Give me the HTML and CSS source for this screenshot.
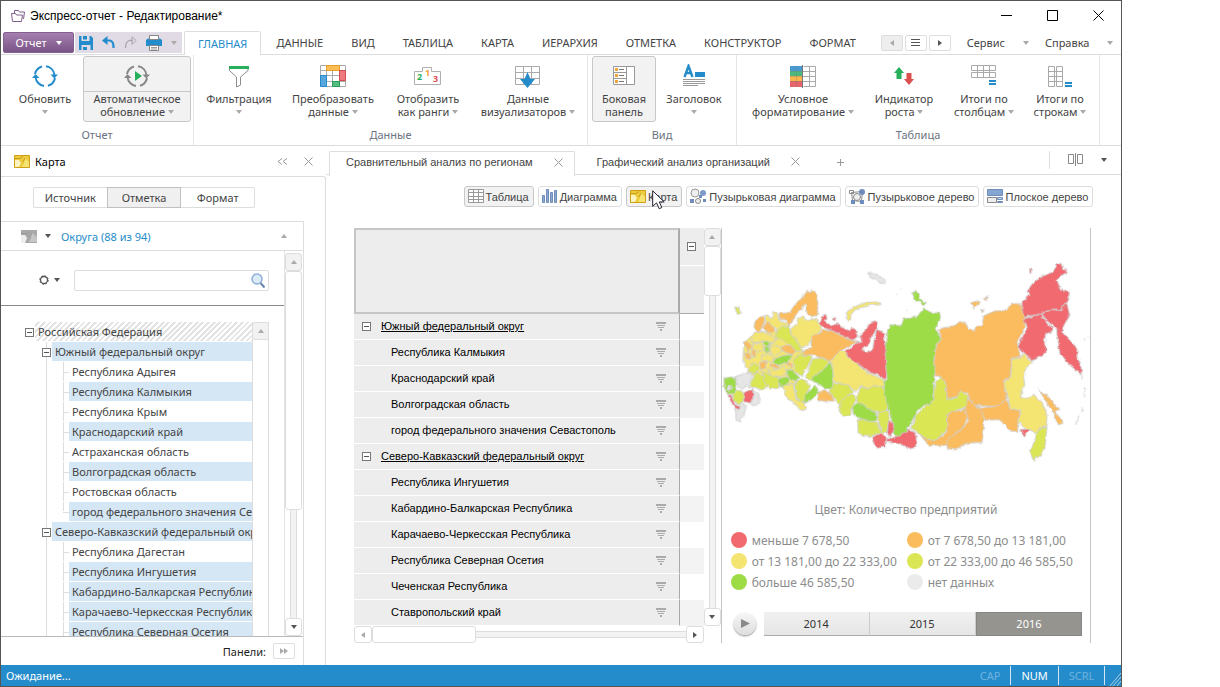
FILE: index.html
```html
<!DOCTYPE html>
<html lang="ru">
<head>
  <meta charset="UTF-8" />
  <meta name="viewport" content="width=device-width, initial-scale=1.0" />
  <title>Экспресс-отчет - Редактирование*</title>
  <link rel="stylesheet" href="styles.css">
</head>
<body>
  <div class="window">
    <header class="titlebar">
      <svg class="app-icon" width="15" height="13" viewBox="0 0 15 13" fill="#fff" stroke="#80608c"><path d="M3.500 3.500V.5h4l1 1.500h5l-1 7"/><path d="M1.500 11.500l-1-8h4l1 1.500h6l-1 6.500z"/></svg>
      <h1>Экспресс-отчет - Редактирование*</h1>
      <div class="window-buttons">
        <button aria-label="Свернуть"><svg width="11" height="11"><path d="M0 5.500h11" stroke="#000"/></svg></button>
        <button aria-label="Развернуть"><svg width="11" height="11"><path d="M.5.5h10v10H.5z" fill="none" stroke="#000"/></svg></button>
        <button aria-label="Закрыть"><svg width="11" height="11"><path d="M.5.5l10 10M10.500.5l-10 10" stroke="#000"/></svg></button>
      </div>
    </header>

    <nav class="menubar">
      <button class="report-button">Отчет <i class="tri down"></i></button>
      <div class="quick">
        <button aria-label="Сохранить"><svg width="14" height="14"><path fill="#258ccb" d="M0 0h2.500v5h8V0H12l2 2v12h-2.500V9h-9v5H0z"/><path fill="#258ccb" d="M4 0h4v3.500H4zM4 11h4v3H4z"/></svg></button>
        <button aria-label="Отменить"><svg width="13" height="13"><path d="M4 4.500h4q3.500 1 3.500 6V12" fill="none" stroke="#258ccb" stroke-width="2.200"/><path fill="#258ccb" d="M0 4.500L5.500 0v9z"/></svg></button>
        <button aria-label="Повторить"><svg width="13" height="13"><path d="M9 4.500H5Q1.500 6 1.500 12" fill="none" stroke="#a9a7ad" stroke-width="1.300"/><path fill="none" stroke="#a9a7ad" d="M8 .8l4.200 3.700L8 8.500z"/></svg></button>
        <button aria-label="Печать"><svg width="16" height="16"><path fill="#258ccb" d="M0 5l2-1.500h12L16 5v6H0z"/><path fill="#fff" stroke="#858585" d="M3.500.5h9v4h-9zM3.500 10.500h9v5h-9z"/><path stroke="#999" d="M5 12.500h6M5 14h6"/></svg></button>
        <button aria-label="Настройка панели"><i class="tri down pale"></i></button>
      </div>
      <div class="menu-tabs">
        <a href="#" class="active">ГЛАВНАЯ</a>
        <a href="#">ДАННЫЕ</a>
        <a href="#">ВИД</a>
        <a href="#">ТАБЛИЦА</a>
        <a href="#">КАРТА</a>
        <a href="#">ИЕРАРХИЯ</a>
        <a href="#">ОТМЕТКА</a>
        <a href="#">КОНСТРУКТОР</a>
        <a href="#">ФОРМАТ</a>
      </div>
      <div class="tab-nav">
        <button class="off" aria-label="Назад"><i class="tri left pale"></i></button>
        <button aria-label="Список вкладок"><svg width="9" height="7"><path d="M0 .5h9M0 3.500h9M0 6.500h9" stroke="#555"/></svg></button>
        <button aria-label="Вперед"><i class="tri right"></i></button>
      </div>
      <button class="menu-drop">Сервис <i class="tri down pale"></i></button>
      <button class="menu-drop">Справка <i class="tri down pale"></i></button>
    </nav>

    <section class="ribbon">
      <div class="group">
        <div class="group-row cols-report">
          <button class="tool">
            <svg width="26" height="24" viewBox="0 0 26 24" fill="none" stroke="#258ccb" stroke-width="2"><path d="M3 10A10 10 0 0 1 10 2.500M14 2.200A10 10 0 0 1 22.500 11M23 14A10 10 0 0 1 16 21.700M12 22A10 10 0 0 1 3.500 13"/><path fill="#258ccb" stroke="none" d="M0 14l3.500-4 4 4zM18.500 10.500h7.500l-3.700 4z"/></svg>
            <span>Обновить<br><i class="tri down pale"></i></span>
          </button>
          <button class="tool pressed split">
            <svg width="26" height="24" viewBox="0 0 26 24" fill="none" stroke="#888" stroke-width="2"><path d="M3 10A10 10 0 0 1 10 2.500M14 2.200A10 10 0 0 1 22.500 11M23 14A10 10 0 0 1 16 21.700M12 22A10 10 0 0 1 3.500 13"/><path fill="#888" stroke="none" d="M0 14l3.500-4 4 4zM18.500 10.500h7.500l-3.700 4z"/><path fill="#27b05b" stroke="none" d="M11 7l7 5-7 5z"/></svg>
            <span>Автоматическое<br>обновление <i class="tri down pale"></i></span>
          </button>
        </div>
        <h2>Отчет</h2>
      </div>
      <div class="group">
        <div class="group-row cols-data">
          <button class="tool">
            <svg width="20" height="24"><path fill="none" stroke="#8c8c8c" d="M.5 4.500v2L7.500 13v10l4-2v-8l7.500-6.500v-2"/><path fill="#27b05b" d="M0 2h20v3H0z"/></svg>
            <span>Фильтрация<br><i class="tri down pale"></i></span>
          </button>
          <button class="tool">
            <svg width="26" height="24"><path fill="none" stroke="#aaa" d="M.5 1.500h25v21H.5zM6.500 1v22M12.500 1v22M19.500 1v22M0 6.500h26M0 11.500h26M0 17.500h26"/><path fill="#fbbd55" stroke="#e79f2c" d="M6.500 1.500h13v5h-13z"/><path fill="#ee7b80" stroke="#d64b50" d="M19.500 6.500h6v10h-6z"/><path fill="#58a6db" stroke="#258ccb" d="M.5 11.500h6v11h-6z"/><path fill="#55bd80" stroke="#27a057" d="M12.500 17.500h7v5h-7z"/></svg>
            <span>Преобразовать<br>данные <i class="tri down pale"></i></span>
          </button>
          <button class="tool">
            <svg width="28" height="24"><path fill="#fff" stroke="#b0b0b0" d="M.5 20.500v-13h8v-4h9v4h9v13z"/><g class="rank"><text x="3" y="16" fill="#27b05b">2</text><text x="11" y="12" fill="#f2a33a">1</text><text x="19" y="18" fill="#dd5055">3</text></g></svg>
            <span>Отобразить<br>как ранги <i class="tri down pale"></i></span>
          </button>
          <button class="tool">
            <svg width="26" height="24"><path fill="#fff" stroke="#aaa" d="M.5 2.500h24v18H.5zM8.500 2v19M16.500 2v19M0 8.500h25M0 14.500h25"/><path fill="#258ccb" d="M12.500 8l3 7H20l-7.500 9L5 15h4.500z"/></svg>
            <span>Данные<br>визуализаторов <i class="tri down pale"></i></span>
          </button>
        </div>
        <h2>Данные</h2>
      </div>
      <div class="group">
        <div class="group-row cols-view">
          <button class="tool pressed">
            <svg width="22" height="24"><path fill="#fff" stroke="#999" d="M.5 2.500h21v18H.5zM13.500 2v19M0 8.500h13M0 14.500h13"/><path fill="#f2a33a" d="M2 4h3v3H2zM2 10h3v3H2zM2 16h3v3H2z"/><path stroke="#777" d="M6 5.500h5M6 11.500h5M6 17.500h5"/></svg>
            <span>Боковая<br>панель</span>
          </button>
          <button class="tool">
            <svg width="22" height="24"><path fill="none" stroke="#258ccb" stroke-width="2.400" d="M1.500 13L5.500 2 9.500 13M3 9h5"/><path fill="#258ccb" d="M12 8h10v5H12z"/><path stroke="#999" d="M0 15.500h22M0 17.500h22M0 19.500h22M0 21.500h15"/></svg>
            <span>Заголовок<br><i class="tri down pale"></i></span>
          </button>
        </div>
        <h2>Вид</h2>
      </div>
      <div class="group">
        <div class="group-row cols-table">
          <button class="tool">
            <svg width="26" height="24"><path fill="#4a9ad2" d="M0 2h13v5H0z"/><path fill="#4cb97a" d="M0 7h13v5H0z"/><path fill="#fbb64b" d="M0 12h13v5H0z"/><path fill="#e5656a" d="M0 17h13v6H0z"/><path fill="none" stroke="#aaa" d="M13.500 2.500h12v20h-12M19.500 2v21M13 7.500h13M13 12.500h13M13 17.500h13"/><path stroke="#777" stroke-opacity=".3" d="M6.500 2v21M0 7.500h13M0 12.500h13M0 17.500h13"/><path stroke="#777" d="M12.500 1v23"/></svg>
            <span>Условное<br>форматирование <i class="tri down pale"></i></span>
          </button>
          <button class="tool">
            <svg width="20" height="24"><path fill="#27b05b" d="M5 3l5 6H7.500v6h-5V9H0z"/><path fill="#d9504f" d="M12.500 9h5v6H20l-5 6-5-6h2.500z"/></svg>
            <span>Индикатор<br>роста <i class="tri down pale"></i></span>
          </button>
          <button class="tool">
            <svg width="26" height="24"><path fill="#fff" stroke="#aaa" d="M.5 1.500h24v5H.5zM.5 8.500h24v5H.5zM6.500 1v12M12.500 1v12M18.500 1v12"/><path fill="#258ccb" d="M18 16h7v2h-7zM18 19h7v2h-7z"/></svg>
            <span>Итоги по<br>столбцам <i class="tri down pale"></i></span>
          </button>
          <button class="tool">
            <svg width="24" height="24"><path fill="#fff" stroke="#aaa" d="M.5 2.500h6v20h-6zM8.500 2.500h6v20h-6zM0 7.500h15M0 12.500h15M0 17.500h15"/><path fill="#258ccb" d="M17 18h7v2h-7zM17 21h7v2h-7z"/></svg>
            <span>Итоги по<br>строкам <i class="tri down pale"></i></span>
          </button>
        </div>
        <h2>Таблица</h2>
      </div>
    </section>

    <div class="workspace">
      <aside class="side">
        <div class="side-head">
          <svg width="16" height="13"><path fill="#eccb3c" stroke="#cfa016" d="M.5.5h15v12H.5z"/><path fill="#fbf3c0" d="M1 5h4l2 3-2 4H1z"/><path fill="#f5e372" d="M11 3l4 4v5H8l2-4z"/><path stroke="#c99a1c" fill="none" d="M1 3.500h5l3-2M9 7l2-4"/></svg>
          <h2>Карта</h2>
          <button class="ghost" aria-label="Свернуть панель"><svg width="11" height="7"><path d="M5 .5l-4 3 4 3M10 .5l-4 3 4 3" fill="none" stroke="#999"/></svg></button>
          <button class="ghost" aria-label="Закрыть панель"><svg width="9" height="9"><path d="M.5.5l8 8M8.500.5l-8 8" stroke="#999"/></svg></button>
        </div>
        <div class="side-body">
          <div class="segments">
            <button>Источник</button>
            <button class="active">Отметка</button>
            <button>Формат</button>
          </div>
          <section class="dimension">
            <div class="dim-head">
              <svg width="16" height="13"><path fill="#a9a9a9" d="M0 0h16v13H0z"/><path fill="#eee" d="M0 5h4l2 3-2 5H0z"/><path fill="#c6c6c6" d="M11 3l5 4v5H8l2-4z"/><path stroke="#999" fill="none" d="M0 3.500h6l3-2M8 7l3-4"/></svg>
              <i class="tri down"></i>
              <a href="#">Округа (88 из 94)</a>
              <i class="tri up pale"></i>
            </div>
            <div class="dim-body">
              <div class="dim-main">
                <div class="search">
                  <button class="ghost" aria-label="Настройки"><svg width="10" height="10"><circle cx="5" cy="5" r="3.500" fill="none" stroke="#555" stroke-width="1.300"/><circle cx="5" cy="5" r="4.300" fill="none" stroke="#555" stroke-dasharray="1.600 1.780"/></svg> <i class="tri down"></i></button>
                  <label class="search-box">
                    <input type="text" aria-label="Поиск">
                    <svg width="14" height="15"><path d="M9.500 10l4 4.500" stroke="#6484ab" stroke-width="2"/><circle cx="6" cy="6" r="5" fill="#dcebfa" stroke="#8fafd6" stroke-width="1.500"/></svg>
                  </label>
                </div>
                <div class="tree-area">
                  <ul class="tree">
                    <li>
                      <div class="node"><button class="toggle" aria-label="Свернуть"></button><span class="partial">Российская Федерация</span></div>
                      <ul>
                        <li>
                          <div class="node"><button class="toggle" aria-label="Свернуть"></button><span class="on">Южный федеральный округ</span></div>
                          <ul class="leaves">
                            <li><span>Республика Адыгея</span></li>
                            <li><span class="on">Республика Калмыкия</span></li>
                            <li><span>Республика Крым</span></li>
                            <li><span class="on">Краснодарский край</span></li>
                            <li><span>Астраханская область</span></li>
                            <li><span class="on">Волгоградская область</span></li>
                            <li><span>Ростовская область</span></li>
                            <li><span class="on">город федерального значения Севастополь</span></li>
                          </ul>
                        </li>
                        <li>
                          <div class="node"><button class="toggle" aria-label="Свернуть"></button><span class="on">Северо-Кавказский федеральный округ</span></div>
                          <ul class="leaves">
                            <li><span>Республика Дагестан</span></li>
                            <li><span class="on">Республика Ингушетия</span></li>
                            <li><span class="on">Кабардино-Балкарская Республика</span></li>
                            <li><span class="on">Карачаево-Черкесская Республика</span></li>
                            <li><span class="on">Республика Северная Осетия</span></li>
                            <li><span class="on">Чеченская Республика</span></li>
                          </ul>
                        </li>
                      </ul>
                    </li>
                  </ul>
                  <div class="tree-scroll"><button class="scroll-btn off" aria-label="Вверх"><i class="tri up pale"></i></button></div>
                </div>
              </div>
              <div class="vscroll">
                <button class="scroll-btn off" aria-label="Вверх"><i class="tri up pale"></i></button>
                <div class="track"><div class="thumb tall"></div></div>
                <button class="scroll-btn" aria-label="Вниз"><i class="tri down"></i></button>
              </div>
            </div>
            <div class="panels">
              <span>Панели:</span>
              <button aria-label="Показать панели"><i class="tri right pale"></i><i class="tri right pale"></i></button>
            </div>
          </section>
        </div>
      </aside>

      <main class="main">
        <div class="doc-tabs">
          <div class="doc-tab active"><a href="#">Сравнительный анализ по регионам</a><button class="ghost" aria-label="Закрыть вкладку"><svg width="9" height="9"><path d="M.5.5l8 8M8.500.5l-8 8" stroke="#999"/></svg></button></div>
          <div class="doc-tab"><a href="#">Графический анализ организаций</a><button class="ghost" aria-label="Закрыть вкладку"><svg width="9" height="9"><path d="M.5.5l8 8M8.500.5l-8 8" stroke="#999"/></svg></button></div>
          <button class="ghost add" aria-label="Новая вкладка"><svg width="7" height="7"><path d="M0 3.500h7M3.500 0v7" stroke="#999"/></svg></button>
          <div class="split-view">
            <button class="ghost" aria-label="Разделить"><svg width="15" height="13"><path d="M.5 1.500h5v9h-5zM9.500 1.500h5v9h-5z" fill="none" stroke="#888"/><path d="M7.500 0v13" stroke="#888"/></svg></button>
            <button class="ghost" aria-label="Варианты"><i class="tri down"></i></button>
          </div>
        </div>

        <div class="views">
          <button class="active"><svg width="16" height="15"><path fill="#fff" stroke="#999" d="M.5.5h15v13H.5zM5.500 0v14M10.500 0v14M0 3.500h16M0 7.500h16M0 10.500h16"/></svg>Таблица</button>
          <button><svg width="16" height="15"><path fill="#8ea8d0" stroke="#6f8cba" d="M.5 6.500h2v7h-2zM4.500.5h2v13h-2zM8.500 3.500h2v10h-2zM12.500 1.500h2v12h-2z"/></svg>Диаграмма</button>
          <button class="active with-cursor"><svg width="16" height="13"><path fill="#eccb3c" stroke="#cfa016" d="M.5.5h15v12H.5z"/><path fill="#fbf3c0" d="M1 5h4l2 3-2 4H1z"/><path fill="#f5e372" d="M11 3l4 4v5H8l2-4z"/><path stroke="#c99a1c" fill="none" d="M1 3.500h5l3-2M9 7l2-4"/></svg>Карта
            <svg class="cursor" width="13" height="20" viewBox="0 0 13 20"><path d="M.7.8v15.500l3.800-3.400 2.700 5.800 2.600-1.200-2.500-5.600h4.900z" fill="#fff" stroke="#223"/></svg>
          </button>
          <button><svg width="17" height="17"><circle cx="5" cy="5" r="4" fill="#eee" stroke="#999"/><circle cx="13" cy="5" r="3" fill="#7d9cc9"/><circle cx="8" cy="13" r="2.500" fill="#eee" stroke="#888"/><path fill="#6f8cba" d="M0 11h4v4H0zM13 11h3v3h-3zM9 7h3v3H9z"/></svg>Пузырьковая диаграмма</button>
          <button><svg width="17" height="17"><path fill="none" stroke="#888" d="M2.500 4.500l11-1-1 10-9-1zM.5 2.500h4v3h-4z"/><circle cx="8" cy="9" r="3.500" fill="#eee" stroke="#888"/><circle cx="13" cy="4" r="3" fill="#6f8cba"/><path fill="#6f8cba" d="M2 12h4v4H2zM11 12h4v4h-4z"/></svg>Пузырьковое дерево</button>
          <button><svg width="16" height="15"><path fill="#86a5d2" stroke="#6f8cba" d="M.5.5h15v6H.5z"/><path fill="#eee" stroke="#888" d="M.5 8.500h9v5h-9z"/><path fill="#c4d3ea" stroke="#6f8cba" d="M10.500 8.500h5v2h-5zM10.500 12.500h5v1h-5z"/></svg>Плоское дерево</button>
        </div>

        <div class="report">
          <div class="grid-pane">
            <table>
              <thead>
                <tr class="head-top"><th rowspan="2" class="corner" aria-label="Регионы"></th><th class="top"><button class="toggle" aria-label="Свернуть"></button></th></tr>
                <tr class="head-sub"><th class="sub"></th></tr>
              </thead>
              <tbody>
                <tr class="parent"><th><button class="toggle" aria-label="Свернуть"></button><span>Южный федеральный округ</span></th><td></td></tr>
                <tr><th><span>Республика Калмыкия</span></th><td></td></tr>
                <tr><th><span>Краснодарский край</span></th><td></td></tr>
                <tr><th><span>Волгоградская область</span></th><td></td></tr>
                <tr><th><span>город федерального значения Севастополь</span></th><td></td></tr>
                <tr class="parent"><th><button class="toggle" aria-label="Свернуть"></button><span>Северо-Кавказский федеральный округ</span></th><td></td></tr>
                <tr><th><span>Республика Ингушетия</span></th><td></td></tr>
                <tr><th><span>Кабардино-Балкарская Республика</span></th><td></td></tr>
                <tr><th><span>Карачаево-Черкесская Республика</span></th><td></td></tr>
                <tr><th><span>Республика Северная Осетия</span></th><td></td></tr>
                <tr><th><span>Чеченская Республика</span></th><td></td></tr>
                <tr><th><span>Ставропольский край</span></th><td></td></tr>
              </tbody>
            </table>
            <div class="vscroll">
              <button class="scroll-btn off" aria-label="Вверх"><i class="tri up pale"></i></button>
              <div class="track"><div class="thumb"></div></div>
              <button class="scroll-btn" aria-label="Вниз"><i class="tri down"></i></button>
            </div>
            <div class="hscroll">
              <button class="scroll-btn" aria-label="Влево"><i class="tri left pale"></i></button>
              <div class="track"><div class="thumb"></div></div>
              <button class="scroll-btn" aria-label="Вправо"><i class="tri right"></i></button>
            </div>
          </div>

          <div class="map-pane">
            <svg class="map" viewBox="0 0 1107 660" role="img" aria-label="Карта регионов">
              <defs>
                <filter id="coast" x="-2%" y="-2%" width="104%" height="104%">
                  <feTurbulence type="fractalNoise" baseFrequency=".07" numOctaves="2" seed="4"/>
                  <feDisplacementMap in="SourceGraphic" scale="11" xChannelSelector="R" yChannelSelector="G"/>
                </filter>
              </defs>
              <g filter="url(#coast)">
              <g class="regions" transform="translate(-19 2)">
                <!-- european part -->
                <path class="c3" d="M105 262L118 245 185 240 250 290 262 300 250 330 240 400 200 410 100 370 82 325 85 275z"/>
                <path class="c4" d="M57 170L68 168 76 188 66 192z"/>
                <path class="c3" d="M152 196L170 200 172 184 184 184 190 208 222 222 200 232 185 240 165 222 150 215z"/>
                <path class="c2" d="M190 188L222 186 232 170 246 152 262 140 272 124 290 120 302 128 307 160 305 195 290 197 275 190 270 160 262 165 255 180 240 190 232 210 222 226 208 208 192 206z"/>
                <path class="c2" d="M118 212L135 198 148 198 146 215 140 238 125 243 115 230z"/>
                <path class="c2" d="M150 216L165 218 178 240 165 248 142 234z"/>
                <path class="c3" d="M224 236L240 222 250 200 262 194 268 208 290 204 305 208 315 225 318 238 295 252 285 275 270 290 255 290 240 265 226 252z"/>
                <path class="c4" d="M185 240L200 225 222 226 226 252 242 268 255 290 262 298 245 303 225 285 205 270 182 262z"/>
                <path class="c3" d="M104 262L118 245 140 244 182 262 172 278 140 274 110 276z"/>
                <path class="c3" d="M112 280L138 278 145 298 125 305 108 298z"/>
                <path class="c3" d="M162 288L185 285 200 300 180 318 165 308z"/>
                <path class="c3" d="M140 312L165 312 175 328 155 335 138 328z"/>
                <path class="c2" d="M82 275L95 271 110 288 98 300z"/>
                <path class="c2" d="M85 305L100 303 108 325 92 325z"/>
                <path class="c2" d="M108 298L122 300 120 318 110 320z"/>
                <path class="c5" d="M140 273L155 271 165 283 150 287z"/>
                <path class="c5" d="M146 290L160 286 162 304 148 304z"/>
                <path class="c2" d="M195 290L215 282 242 300 230 312 205 303z"/>
                <path class="c5" d="M172 328L200 315 230 312 225 325 200 340 180 345z"/>
                <path class="c2" d="M132 334L150 333 151 352 135 358z"/>
                <path class="c2" d="M165 335L178 342 192 352 180 356 166 346z"/>
                <path class="c2" d="M205 335L222 336 234 346 225 350z"/>
                <path class="c3" d="M155 358L180 358 205 345 215 365 195 380 165 372z"/>
                <path class="c4" d="M230 330L262 303 290 318 275 350 260 375 240 365 238 345z"/>
                <path class="c4" d="M96 362L110 333 130 350 125 370z"/>
                <path class="c4" d="M98 410L122 364 145 378 155 405 140 420 120 410z"/>
                <path class="c4" d="M140 362L165 372 188 380 190 412 165 416 148 400z"/>
                <path class="c5" d="M190 384L215 378 224 390 205 408 192 408z"/>
                <path class="c5" d="M208 360L228 354 240 370 250 378 245 392 222 385z"/>
                <path class="c4" d="M236 400L258 384 285 405 275 425 265 455 245 448z"/>
                <path class="c3" d="M200 407L232 397 238 425 242 448 262 455 272 478 255 480 235 455 215 445z"/>
                <path class="c5" d="M264 458L270 430 300 406 312 424 300 435 285 450z"/>
                <path class="c4" d="M270 382L282 345 290 325 315 322 345 333 320 360 300 375 285 390z"/>
                <path class="c5" d="M282 388L300 375 320 360 345 335 352 360 354 395 350 415 330 415 310 400z"/>
                <path class="c2" d="M306 430L325 417 345 430 356 450 335 454 308 448z"/>
                <path class="c2" d="M290 255L320 240 345 238 370 252 392 264 425 272 395 290 372 302 345 332 315 322 290 312 262 315 264 302 285 290z"/>
                <path class="c1" d="M310 218L316 200 330 190 335 205 325 212 345 225 365 220 385 232 402 240 412 232 425 240 425 262 410 268 390 262 370 250 345 238 325 232z"/>
                <path class="c1" d="M350 200L360 200 360 208 352 208z"/>
                <path class="c3" d="M392 185L410 172 440 158 470 153 497 157 495 162 465 164 440 170 418 178 408 190 405 208 396 208z"/>
                <path class="c6" d="M460 65L475 70 490 76 505 84 512 96 495 98 480 86 464 80z"/>
                <!-- south -->
                <path class="c5" d="M25 382L60 379 62 400 55 430 35 430 26 410z"/>
                <path class="c6" d="M60 378L78 372 105 365 108 385 92 408 76 415 62 400z"/>
                <path class="c6" d="M36 404L48 404 46 420 36 418z"/>
                <path class="c6" d="M110 417L130 430 131 462 112 464 100 460 112 440z"/>
                <path class="c6" d="M55 462L80 455 92 470 85 490 74 512 62 510 60 488z"/>
                <path class="c4" d="M52 432L66 415 84 428 84 452 68 460 52 450z"/>
                <path class="c1" d="M85 425L112 416 112 443 100 462 84 450z"/>
                <path class="c1" d="M36 432L46 432 58 462 74 468 70 478 56 470 44 450z"/>
                <!-- ural and west siberia -->
                <path class="c1" d="M386 302L410 288 425 272 440 275 432 255 445 245 455 225 478 210 486 215 480 240 468 262 460 280 440 300 455 305 472 295 475 270 484 238 500 242 510 250 505 270 515 285 518 300 512 330 518 360 510 388 490 375 460 365 435 345 410 335 400 320z"/>
                <path class="c3" d="M345 330L372 302 386 302 400 320 435 348 460 368 508 388 505 408 480 405 455 415 435 405 420 425 400 405 370 398 354 395 352 360z"/>
                <path class="c4" d="M342 425L355 400 370 398 400 405 414 425 395 435 375 460 360 450z"/>
                <path class="c4" d="M425 440L435 408 455 415 480 405 505 410 520 430 520 475 500 484 470 482 445 465 424 455z"/>
                <path class="c4" d="M370 480L376 455 395 435 416 430 422 447 410 470 405 492 385 496z"/>
                <path class="c5" d="M410 470L425 455 445 465 482 487 484 510 465 514 440 510 425 500 412 490z"/>
                <path class="c4" d="M485 485L520 480 522 510 515 545 500 548 490 520z"/>
                <path class="c4" d="M425 508L450 510 485 515 496 545 480 550 465 558 435 552 428 545z"/>
                <path class="c1" d="M468 560L495 546 514 562 510 590 490 592 475 580z"/>
              </g>
              <g class="regions" transform="translate(476 2)">
                <!-- siberia and far east -->
                <path class="c5" d="M20 240L30 222 60 225 70 205 110 198 130 172 150 185 178 188 180 205 165 235 182 265 165 285 160 340 165 375 160 400 160 455 140 460 110 480 90 520 75 550 50 558 35 545 32 500 22 470 12 430 10 395 20 385 15 340 15 280 20 265z"/>
                <path class="c1" d="M24 510L38 515 40 540 26 560 20 545z"/>
                <path class="c1" d="M18 565L50 558 65 548 85 538 108 548 106 590 85 596 60 580 18 575z"/>
                <path class="c5" d="M95 125L108 121 116 135 120 148 138 156 128 166 118 152 104 148z"/>
                <path class="c2" d="M175 235L200 230 230 222 235 213 255 215 262 232 282 242 290 228 305 220 310 195 345 180 375 180 395 158 425 160 430 185 440 205 430 235 410 275 415 295 420 320 395 325 390 380 370 390 380 445 360 460 330 468 280 464 260 430 240 422 225 440 200 445 195 395 178 378 165 375 160 340 165 290 182 265z"/>
                <path class="c1" d="M425 155L445 130 440 122 455 100 480 80 520 62 526 42 545 38 550 55 562 65 540 75 530 88 540 118 568 125 560 152 545 178 515 175 480 190 430 200 425 180z"/>
                <path class="c1" d="M430 205L480 190 500 215 515 232 512 245 495 250 492 280 500 300 485 315 455 332 440 315 412 290 430 250 440 230z"/>
                <path class="c1" d="M483 190L515 176 545 180 552 158 560 160 568 195 550 225 545 245 570 270 590 295 590 320 602 345 603 372 570 345 538 310 528 235 505 215z"/>
                <path class="c1" d="M447 55L455 52 455 66 449 68z"/>
                <path class="c3" d="M395 325L420 322 428 308 455 335 435 355 430 400 420 440 438 444 460 432 485 455 500 490 498 525 480 530 470 548 430 530 412 515 420 480 388 475 385 450 370 395 390 380z"/>
                <path class="c4" d="M468 548L485 528 500 530 495 580 485 612 465 620 460 634 448 600 462 580z"/>
                <path class="c2" d="M475 418L510 445 525 468 538 475 524 482 548 515 540 522 526 510 515 482z"/>
                <path class="c1" d="M418 537L452 535 430 558z"/>
                <path class="c2" d="M280 464L305 472 340 468 380 448 390 475 418 480 412 515 412 545 385 540 360 508 320 508 305 500z"/>
                <path class="c4" d="M90 535L105 495 140 462 160 450 165 395 180 378 195 400 200 445 225 442 240 420 265 440 255 470 225 480 200 490 198 540 160 572 130 560 105 540z"/>
                <path class="c2" d="M112 545L130 560 160 572 198 545 200 490 225 482 255 475 265 495 248 530 215 560 200 585 145 585z"/>
                <path class="c2" d="M262 440L282 464 305 480 310 510 305 575 260 578 225 598 200 594 200 570 245 535 266 510 252 480z"/>
                <path class="c2" d="M270 158L290 150 300 155 280 172zM308 145L324 138 318 150zM300 178L312 180 306 184z"/>
                <path class="c6" d="M605 375v12M612 410v30M605 470v15M595 495l-6 28M44 130h3M80 178h3M60 115h3M610 268h6M622 260h3"/>
              </g>
              </g>
            </svg>
            <p class="legend-title">Цвет: Количество предприятий</p>
            <ul class="legend">
              <li><i class="b1"></i>меньше 7 678,50</li>
              <li><i class="b2"></i>от 7 678,50 до 13 181,00</li>
              <li><i class="b3"></i>от 13 181,00 до 22 333,00</li>
              <li><i class="b4"></i>от 22 333,00 до 46 585,50</li>
              <li><i class="b5"></i>больше 46 585,50</li>
              <li><i class="b6"></i>нет данных</li>
            </ul>
            <div class="timeline">
              <button class="play" aria-label="Воспроизвести"><svg width="9" height="9"><path fill="#8a8a8a" d="M0 0l9 4.500L0 9z"/></svg></button>
              <div class="years">
                <button>2014</button>
                <button>2015</button>
                <button class="active">2016</button>
              </div>
            </div>
          </div>
        </div>
      </main>
    </div>

    <footer class="status">
      <span class="state">Ожидание...</span>
      <span>CAP</span>
      <span class="lit">NUM</span>
      <span>SCRL</span>
      <svg width="16" height="20"><path d="M5 20L16 7M8 20L16 11M12 20L16 15" stroke="#a9cbe3" fill="none"/></svg>
    </footer>
  </div>
</body>
</html>
```
FILE: styles.css
```css
* {
  box-sizing: border-box;
  margin: 0;
  padding: 0;
}
body {
  font-family: "Noto Sans", "Open Sans", sans-serif;
  font-size: 11px;
  color: #444;
  background: #fff;
}
button {
  font: inherit;
  color: inherit;
  background: none;
  border: none;
}
a {
  color: inherit;
  text-decoration: none;
}
ul {
  list-style: none;
}
h1, h2 {
  font-size: 11px;
  font-weight: normal;
}
svg {
  flex: none;
}
.window {
  width: 92%;
  height: 100vh;
  min-width: 1100px;
  border: 1px solid #555;
  display: flex;
  flex-direction: column;
}

/* small arrows */
.tri {
  display: inline-block;
  flex: none;
  width: 0;
  height: 0;
  border: 3px solid transparent;
  color: #555;
}
.tri.pale {
  color: #aaa;
}
.tri.down {
  border-top: 4px solid;
  border-bottom: none;
}
.tri.up {
  border-bottom: 4px solid;
  border-top: none;
}
.tri.left {
  border-right: 4px solid;
  border-left: none;
}
.tri.right {
  border-left: 4px solid;
  border-right: none;
}

/* title */
.titlebar {
  height: 30px;
  display: flex;
  align-items: center;
  padding-left: 10px;
}
.titlebar h1 {
  font-family: "Liberation Sans", Arial, sans-serif;
  font-size: 12px;
  color: #000;
  margin-left: 4px;
}
.window-buttons {
  margin-left: auto;
  display: flex;
}
.window-buttons button {
  width: 46px;
  height: 28px;
}

/* menu */
.menubar {
  height: 24px;
  display: flex;
  align-items: center;
  border-bottom: 1px solid #ddd;
}
.report-button {
  width: 71px;
  height: 21px;
  margin-left: 2px;
  color: #fff;
  background: linear-gradient(#a67fb0, #7b5487);
  border: 1px solid #80608c;
  border-radius: 2px;
  display: flex;
  align-items: center;
  justify-content: center;
  gap: 9px;
}
.report-button .tri {
  color: #fff;
}
.quick {
  height: 21px;
  margin: 0 2px 0 1px;
  padding: 0 5px 0 4px;
  background: #e0dbe5;
  display: flex;
  align-items: center;
  gap: 9px;
}
.quick button {
  display: flex;
}
.menu-tabs {
  display: flex;
  align-self: flex-end;
  gap: 2px;
}
.menu-tabs a {
  height: 23px;
  line-height: 23px;
  padding: 0 13px;
}
.menu-tabs .active {
  color: #258ccb;
  border: 1px solid #ddd;
  border-bottom: none;
  border-radius: 2px 2px 0 0;
  background: #fff;
  height: 24px;
  margin-bottom: -1px;
}
.tab-nav {
  margin-left: auto;
  display: flex;
  gap: 2px;
}
.tab-nav button {
  width: 22px;
  height: 16px;
  border: 1px solid #ddd;
  border-radius: 2px;
  display: flex;
  align-items: center;
  justify-content: center;
}
.tab-nav .off {
  background: #eee;
}
.menu-drop {
  display: flex;
  align-items: center;
  gap: 18px;
  padding: 0 0 0 16px;
}
.menu-drop:last-child {
  padding-right: 8px;
}

/* ribbon */
.ribbon {
  height: 91px;
  display: flex;
  border-bottom: 1px solid #ddd;
}
.group {
  border-right: 1px solid #e6e6e6;
  padding-top: 1px;
}
.group-row {
  display: grid;
}
.cols-report {
  grid-template-columns: 82px 108px 2px;
}
.cols-data {
  grid-template-columns: 90px 98px 92px 108px;
  padding-right: 5px;
}
.cols-view {
  grid-template-columns: 64px 76px;
  padding: 0 4px;
}
.cols-table {
  grid-template-columns: 132px 70px 90px 62px;
  padding-right: 8px;
}
.group h2 {
  margin-top: 5px;
  line-height: 16px;
  text-align: center;
  color: #6b7280;
}
.tool {
  height: 66px;
  padding-top: 7px;
  display: flex;
  flex-direction: column;
  align-items: center;
  border: 1px solid transparent;
  border-radius: 3px;
  white-space: nowrap;
}
.cols-report .tool:first-child {
  padding-left: 6px;
}
.tool span {
  margin-top: 4px;
  line-height: 13px;
}
.tool .tri {
  margin-left: 7px;
  vertical-align: 0;
}
.tool br + .tri {
  margin-left: 0;
  vertical-align: 2px;
}
.tool.pressed {
  background: #f2f2f2;
  border-color: #c8c8c8;
}
.tool.split span {
  align-self: stretch;
  margin-top: 3px;
  border-top: 1px solid #c8c8c8;
}
.rank {
  font-size: 9px;
  font-weight: bold;
}

/* side panel */
.workspace {
  flex: 1;
  min-height: 0;
  display: flex;
}
.side {
  width: 325px;
  flex: none;
  display: flex;
  flex-direction: column;
}
.side-head {
  height: 30px;
  display: flex;
  align-items: center;
  padding: 0 13px;
}
.side-head h2 {
  margin: 0 auto 0 5px;
  color: #000;
}
.ghost {
  display: flex;
  align-items: center;
}
.side-head .ghost + .ghost {
  margin-left: 16px;
}
.side-body {
  flex: 1;
  min-height: 0;
  border: 1px solid #ddd;
  border-width: 1px 1px 0 0;
  border-radius: 0 3px 0 0;
  padding: 10px 21px 0 0;
  display: flex;
  flex-direction: column;
}
.segments {
  display: flex;
  margin: 0 49px 13px 32px;
}
.segments button {
  flex: 1;
  height: 21px;
  border: 1px solid #ddd;
  margin-left: -1px;
}
.segments button:first-child {
  margin-left: 0;
  border-radius: 2px 0 0 2px;
}
.segments button:last-child {
  border-radius: 0 2px 2px 0;
}
.segments .active {
  background: #f0f0f0;
  border-color: #c0c0c0;
  position: relative;
}
.dimension {
  flex: 1;
  min-height: 0;
  border: 1px solid #ddd;
  border-width: 1px 1px 0 0;
  display: flex;
  flex-direction: column;
}
.dim-head {
  height: 29px;
  flex: none;
  display: flex;
  align-items: center;
  border-bottom: 1px solid #ddd;
  padding: 0 16px 0 20px;
}
.dim-head svg {
  margin-right: 8px;
}
.dim-head a {
  color: #258ccb;
  margin: 0 auto 0 10px;
}
.dim-body {
  flex: 1;
  min-height: 0;
  display: flex;
  border-bottom: 1px solid #bbb;
}
.dim-body > .vscroll {
  margin: 2px 1px 0 0;
}
.dim-main {
  flex: 1;
  min-width: 0;
  display: flex;
  flex-direction: column;
  border-right: 1px solid #e4e4e4;
}
.search {
  height: 55px;
  flex: none;
  display: flex;
  align-items: center;
  border-bottom: 1px solid #888;
  padding: 4px 15px 0 38px;
  gap: 14px;
}
.search .ghost {
  gap: 5px;
}
.search-box {
  flex: 1;
  height: 21px;
  display: flex;
  align-items: center;
  border: 1px solid #ddd;
  border-radius: 2px;
  padding-right: 3px;
}
.search-box input {
  flex: 1;
  min-width: 0;
  border: none;
  outline: none;
  font: inherit;
}
.tree-area {
  flex: 1;
  min-height: 0;
  display: flex;
  margin: 16px 15px 0 0;
  overflow: hidden;
}
.tree {
  flex: 1;
  min-width: 0;
  padding-left: 24px;
  overflow: hidden;
}
.tree ul {
  margin-left: 17px;
}
.tree li {
  position: relative;
}
.tree li span {
  display: block;
  flex: 1;
  min-width: 0;
  height: 19px;
  line-height: 19px;
  padding-left: 3px;
  margin-bottom: 1px;
  white-space: nowrap;
  overflow: hidden;
}
.tree .on {
  background: #d5e7f5;
}
.tree .partial {
  background: repeating-linear-gradient(135deg, #fff 0 2px, #e3e3e3 2px 4px);
}
.node {
  display: flex;
}
.node .toggle {
  margin: 6px 1px 0 0;
}
.toggle {
  position: relative;
  z-index: 1;
  flex: none;
  width: 9px;
  height: 9px;
  border: 1px solid #777;
  background: linear-gradient(#555, #555) center / 5px 1px no-repeat #fff;
}
.tree ul li::before {
  content: "";
  position: absolute;
  left: 4px;
  top: 0;
  bottom: 0;
  border-left: 1px solid #ddd;
}
.leaves li {
  padding-left: 10px;
}
.leaves li::after {
  content: "";
  position: absolute;
  left: 4px;
  top: 10px;
  width: 6px;
  border-top: 1px solid #ddd;
}
.leaves li:last-child::before {
  bottom: 10px;
}
.tree-scroll {
  width: 17px;
  border: 1px solid #ddd;
  border-width: 0 1px;
}
.tree-scroll .scroll-btn {
  margin: 0 -1px;
}
.panels {
  height: 28px;
  flex: none;
  display: flex;
  align-items: center;
  justify-content: flex-end;
  gap: 7px;
  padding-right: 8px;
  color: #222;
}
.panels button {
  width: 22px;
  height: 16px;
  border: 1px solid #ddd;
  border-radius: 2px;
  display: flex;
  align-items: center;
  justify-content: center;
}

/* scroll bars */
.scroll-btn {
  width: 17px;
  height: 18px;
  flex: none;
  border: 1px solid #ddd;
  border-radius: 3px;
  background: #fff;
  display: flex;
  align-items: center;
  justify-content: center;
}
.scroll-btn.off {
  background: #f2f2f2;
}
.vscroll {
  width: 17px;
  display: flex;
  flex-direction: column;
}
.track {
  flex: 1;
  background: linear-gradient(#ddd, #ddd) 5px 0 / 1px 100% no-repeat, linear-gradient(#ddd, #ddd) 11px 0 / 1px 100% no-repeat, linear-gradient(#f3f3f3, #f3f3f3) 5px 0 / 7px 100% no-repeat;
}
.thumb {
  height: 50px;
  border: 1px solid #ddd;
  border-radius: 3px;
  background: #fff;
}
.thumb.tall {
  height: 69%;
}
.hscroll {
  grid-column: 1;
  display: flex;
  height: 17px;
}
.hscroll .scroll-btn {
  width: 18px;
  height: 17px;
}
.hscroll .track {
  background: linear-gradient(#ddd, #ddd) 0 5px / 100% 1px no-repeat, linear-gradient(#ddd, #ddd) 0 11px / 100% 1px no-repeat, linear-gradient(#f3f3f3, #f3f3f3) 0 5px / 100% 7px no-repeat;
}
.hscroll .thumb {
  width: 33%;
  height: 17px;
}

/* documents */
.main {
  flex: 1;
  min-width: 0;
  display: flex;
  flex-direction: column;
}
.doc-tabs {
  height: 29px;
  flex: none;
  display: flex;
  align-items: center;
  padding: 5px 0 0 3px;
  border-bottom: 1px solid #ddd;
}
.doc-tab {
  height: 24px;
  display: flex;
  align-items: center;
  gap: 21px;
  padding: 0 17px 2px 22px;
  font-family: "Liberation Sans", Arial, sans-serif;
}
.doc-tab.active {
  height: 25px;
  margin-bottom: -1px;
  padding: 0 11px 3px 16px;
  background: #fff;
  border: 1px solid #ddd;
  border-bottom: none;
  border-radius: 2px 2px 0 0;
}
.add {
  margin-left: 20px;
}
.split-view {
  margin-left: auto;
  display: flex;
  height: 18px;
  margin-bottom: 6px;
  border-left: 1px solid #ddd;
  padding: 0 14px 0 18px;
  gap: 18px;
}
.views {
  display: flex;
  justify-content: flex-end;
  gap: 4px;
  margin: 11px 28px 21px 0;
}
.views button {
  height: 21px;
  display: flex;
  align-items: center;
  gap: 2px;
  border: 1px solid #ddd;
  border-radius: 3px;
  padding: 0 4px 0 3px;
  font-family: "Liberation Sans", Arial, sans-serif;
  white-space: nowrap;
}
.views .active {
  background: #f2f2f2;
  border-color: #c8c8c8;
}
.with-cursor {
  position: relative;
}
.cursor {
  position: absolute;
  left: 25px;
  top: 3px;
}

/* report */
.report {
  display: grid;
  grid-template-columns: 367fr 371fr;
  margin: 0 30px 0 28px;
}
.grid-pane {
  display: grid;
  grid-template-columns: 1fr 17px;
  align-content: start;
}
table {
  width: 100%;
  align-self: start;
  border-collapse: separate;
  border-spacing: 0;
  font-family: "Liberation Sans", Arial, sans-serif;
  line-height: 13px;
  color: #000;
}
.corner {
  background: #ededed;
  border: 2px solid #c6c6c6;
  border-right-color: #aaa;
}
.head-top {
  height: 38px;
}
.head-sub {
  height: 48px;
}
.top, .sub {
  width: 24px;
  background: #ededed;
}
.top {
  border-bottom: 1px solid #fff;
}
.sub {
  border-bottom: 1px solid #aaa;
}
.top .toggle {
  display: block;
  margin: 0 auto;
}
tbody tr {
  height: 26px;
}
tbody th {
  background: linear-gradient(#aaa, #aaa) right 13px top 8px / 10px 2px no-repeat, linear-gradient(#aaa, #aaa) right 14px top 11px / 8px 1px no-repeat, linear-gradient(#aaa, #aaa) right 15px top 13px / 6px 1px no-repeat, linear-gradient(#aaa, #aaa) right 17px top 15px / 2px 2px no-repeat, #ededed;
  border-right: 1px solid #aaa;
  border-bottom: 1px solid #fff;
  text-align: left;
  font-weight: normal;
  padding-left: 37px;
}
.parent th {
  padding-left: 8px;
}
.parent span {
  text-decoration: underline;
  margin-left: 10px;
}
tbody tr:nth-child(even) td {
  background: #f3f3f3;
}

/* map */
.map-pane {
  border: 1px solid #c4c4c4;
  border-width: 0 1px;
  padding-top: 22px;
  font-size: 12px;
  color: #8c8c8c;
}
.map {
  display: block;
  width: 100%;
}
.regions path {
  stroke: #cfcfcf;
  stroke-width: 3;
  stroke-linejoin: round;
}
.c1 { fill: #f06a70; }
.c2 { fill: #fbbc5e; }
.c3 { fill: #f4e573; }
.c4 { fill: #dbe655; }
.c5 { fill: #9edc46; }
.c6 { fill: #e6e6e6; }
.legend-title {
  margin: 30px 0 10px;
  line-height: 20px;
  text-align: center;
}
.legend {
  display: grid;
  grid-template-columns: 176px 1fr;
  padding-left: 9px;
}
.legend li {
  height: 21px;
  display: flex;
  align-items: center;
  gap: 5px;
  white-space: nowrap;
}
.legend i {
  width: 16px;
  height: 16px;
  border-radius: 50%;
}
.b1 { background: #f06a70; }
.b2 { background: #fbbc5e; }
.b3 { background: #f4e573; }
.b4 { background: #dbe655; }
.b5 { background: #9edc46; }
.b6 { background: #ebebeb; }
.timeline {
  display: flex;
  align-items: center;
  gap: 8px;
  margin: 19px 8px 0 12px;
}
.play {
  width: 22px;
  height: 22px;
  border-radius: 50%;
  background: linear-gradient(#f6f6f6, #ddd);
  box-shadow: 0 1px 2px #888;
  padding-left: 2px;
}
.years {
  flex: 1;
  display: flex;
}
.years button {
  flex: 1;
  height: 24px;
  font-size: 11px;
  color: #333;
  background: linear-gradient(#f0f0f0, #e6e6e6);
  border-bottom: 1px solid #aaa;
  border-right: 1px solid #ccc;
}
.years .active {
  color: #fff;
  background: #96948f;
  border: 1px solid #858585;
}

/* status */
.status {
  height: 21px;
  flex: none;
  display: flex;
  align-items: center;
  background: #258ccb;
  color: #6db3df;
}
.status span {
  padding: 0 10px;
  line-height: 19px;
  border-right: 1px solid #d5e7f5;
}
.status .state {
  color: #fff;
  border: none;
  margin-right: auto;
  padding: 0 5px;
}
.status .lit {
  color: #fff;
}
```
